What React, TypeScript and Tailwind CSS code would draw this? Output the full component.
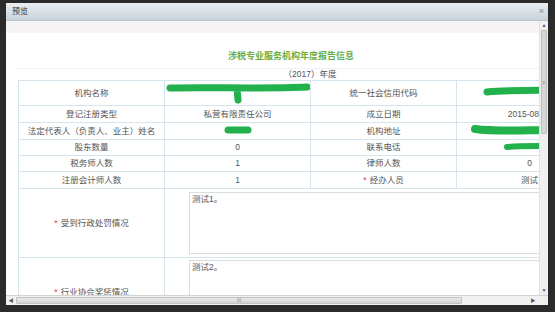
import React from "react";

const cell = "border border-[#d6e4ee] text-center align-middle p-0";

function Blot({ w, h, d, sw }: { w: number; h: number; d: string; sw: number }) {
  return (
    <svg width={w} height={h} className="block">
      <path d={d} stroke="#22b14c" strokeWidth={sw} strokeLinecap="round" strokeLinejoin="round" fill="none" />
    </svg>
  );
}

function Star() {
  return <span className="text-[#e4393c] mr-[3px]">*</span>;
}

export default function App() {
  return (
    <div className="w-[555px] h-[312px] bg-[#2b2b2b] pt-[3px] pl-[6px] pr-[7px] pb-[7px] font-['Liberation_Sans','Noto_Sans_CJK_SC',sans-serif] text-[8.5px] text-[#555]">
      <div className="flex flex-col h-full bg-white">
        {/* title bar */}
        <div className="h-[18px] shrink-0 flex items-center justify-between pl-[6px] pr-[4px] bg-gradient-to-b from-[#eaeef2] to-[#c8d2db] border-b border-[#b9c4cd]">
          <span className="text-[#333] text-[8px]">预览</span>
          <span className="text-[#888] text-[9px] leading-none">×</span>
        </div>

        <div className="flex flex-1 min-h-0">
          {/* content */}
          <div className="flex-1 overflow-hidden flex flex-col">
            <div className="h-[12px] shrink-0 bg-[#f5f3f3]" />
            <div className="w-[620px] pl-[12px]">
              <div className="h-[36px] flex items-end pb-[6px] pl-[210px] border-b border-[#eef2f5]">
                <span className="text-[#6aae3e] font-bold text-[9px] leading-[12px]">涉税专业服务机构年度报告信息</span>
              </div>
              <div className="w-[584px] h-[11px] flex items-center justify-center leading-none">（2017）年度</div>
              <table className="border-collapse table-fixed w-[584px]">
                <colgroup>
                  <col className="w-[146px]" />
                  <col className="w-[146px]" />
                  <col className="w-[146px]" />
                  <col className="w-[146px]" />
                </colgroup>
                <tbody>
                  <tr className="h-[25px]">
                    <td className={cell}>机构名称</td>
                    <td className={cell}>
                      <Blot w={145} h={24} sw={7} d="M5 7 C40 6 100 8 142 6 M72 8 L73 19" />
                    </td>
                    <td className={cell}>统一社会信用代码</td>
                    <td className={cell}>
                      <Blot w={145} h={24} sw={7} d="M30 11 C50 9 70 10 95 9" />
                    </td>
                  </tr>
                  <tr className="h-[17px]">
                    <td className={cell}>登记注册类型</td>
                    <td className={cell}>私营有限责任公司</td>
                    <td className={cell}>成立日期</td>
                    <td className={cell}>2015-08-19</td>
                  </tr>
                  <tr className="h-[17px]">
                    <td className={cell}>法定代表人（负责人、业主）姓名</td>
                    <td className={cell}>
                      <Blot w={145} h={16} sw={7} d="M63 7 L83 7" />
                    </td>
                    <td className={cell}>机构地址</td>
                    <td className={cell}>
                      <Blot w={145} h={16} sw={8} d="M18 6 C40 9 70 7 100 7" />
                    </td>
                  </tr>
                  <tr className="h-[16px]">
                    <td className={cell}>股东数量</td>
                    <td className={cell}>0</td>
                    <td className={cell}>联系电话</td>
                    <td className={cell}>
                      <Blot w={145} h={15} sw={6} d="M50 7 C60 6 75 6 95 6" />
                    </td>
                  </tr>
                  <tr className="h-[16px]">
                    <td className={cell}>税务师人数</td>
                    <td className={cell}>1</td>
                    <td className={cell}>律师人数</td>
                    <td className={cell}>0</td>
                  </tr>
                  <tr className="h-[17px]">
                    <td className={cell}>注册会计师人数</td>
                    <td className={cell}>1</td>
                    <td className={cell}>
                      <Star />经办人员
                    </td>
                    <td className={cell}>测试</td>
                  </tr>
                  <tr className="h-[69px]">
                    <td className={cell}>
                      <Star />受到行政处罚情况
                    </td>
                    <td className={cell + " text-left"} colSpan={3}>
                      <div className="ml-[24px] w-[390px] h-[62px] border border-[#dcdcdc] px-[2px] pt-[1px] leading-[11px]">测试1。</div>
                    </td>
                  </tr>
                  <tr className="h-[69px]">
                    <td className={cell}>
                      <Star />行业协会奖惩情况
                    </td>
                    <td className={cell + " text-left align-top pt-[2px]"} colSpan={3}>
                      <div className="ml-[24px] w-[390px] h-[62px] border border-[#dcdcdc] px-[2px] pt-[1px] leading-[11px]">测试2。</div>
                    </td>
                  </tr>
                </tbody>
              </table>
            </div>
          </div>

          {/* vertical scrollbar */}
          <div className="w-[9px] shrink-0 flex flex-col bg-[#f0f0f0] border-l border-[#e2e2e2]">
            <div className="h-[9px] flex items-center justify-center text-[5px] text-[#555] leading-none">▲</div>
            <div className="h-[104px] mx-[1px] bg-[#d6d6d6] border border-[#bdbdbd] rounded-[1px] flex items-center justify-center">
              <span className="text-[5px] text-[#888] leading-none">≡</span>
            </div>
            <div className="flex-1" />
            <div className="h-[9px] flex items-center justify-center text-[5px] text-[#555] leading-none">▼</div>
          </div>
        </div>

        {/* horizontal scrollbar */}
        <div className="h-[10px] shrink-0 flex bg-[#f0f0f0] border-t border-[#d4d4d4]">
          <div className="w-[10px] flex items-center justify-center text-[5px] text-[#555] leading-none">◀</div>
          <div className="w-[446px] my-[1px] bg-gradient-to-b from-[#eaeaea] to-[#d2d2d2] border border-[#c2c2c2] rounded-[1px] flex items-center justify-center">
            <span className="text-[5px] text-[#888] leading-none">III</span>
          </div>
          <div className="flex-1" />
          <div className="w-[12px] flex items-center justify-center text-[5px] text-[#555] leading-none">▶</div>
          <div className="w-[9px] bg-[#f0f0f0]" />
        </div>
      </div>
    </div>
  );
}
